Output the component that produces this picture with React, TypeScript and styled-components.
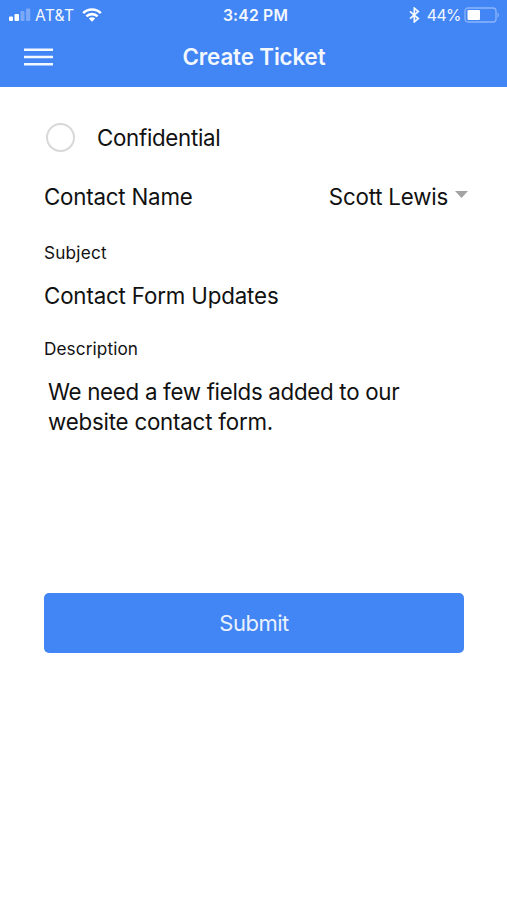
import React from 'react';
import styled, { createGlobalStyle } from 'styled-components';

const GlobalStyle = createGlobalStyle`
  * { box-sizing: border-box; }
  body { margin: 0; background: #fff; }
  button, input, textarea { font: inherit; }
`;

const Screen = styled.div`
  width: 507px;
  height: 900px;
  overflow: hidden;
  background: #fff;
  color: #111;
  font-family: Inter, 'Liberation Sans', sans-serif;
  font-size: 22.3px;
`;

const Header = styled.header`
  height: 87px;
  background: #4285f4;
  color: #f3f8ff;
`;

const Bar = styled.div<{ $height: number }>`
  display: grid;
  grid-template-columns: 1fr auto 1fr;
  align-items: center;
  height: ${(p) => p.$height}px;
`;

const StatusGroup = styled.div<{ $end?: boolean }>`
  display: flex;
  align-items: center;
  justify-content: ${(p) => (p.$end ? 'flex-end' : 'flex-start')};
  padding: ${(p) => (p.$end ? '0 7px 0 0' : '0 0 0 8px')};
`;

const StatusText = styled.span<{ $weight?: number; $tracking?: number }>`
  padding-top: 1px;
  font-size: 15.7px;
  line-height: 20px;
  font-weight: ${(p) => p.$weight ?? 400};
  letter-spacing: ${(p) => p.$tracking ?? 0}px;
  white-space: nowrap;
`;

const Clock = styled(StatusText)`
  padding-left: 4px;
`;

const Glyph = styled.svg<{ $gap?: number }>`
  display: block;
  flex: none;
  margin-right: ${(p) => p.$gap ?? 0}px;
`;

const MenuButton = styled.button`
  display: block;
  margin: 0 0 0 24px;
  padding: 0;
  width: 29px;
  height: 18px;
  border: 0;
  background: none;
  color: inherit;
`;

const Title = styled.h1`
  margin: 0;
  padding-left: 1px;
  font-size: 22.3px;
  line-height: 28px;
  font-weight: 600;
  letter-spacing: -0.1px;
`;

const Form = styled.main`
  display: flex;
  flex-direction: column;
  padding: 36px 43px 0 44px;
`;

const CheckRow = styled.label`
  display: flex;
  align-items: center;
  gap: 22px;
  height: 29px;
  padding-left: 2px;
`;

const Radio = styled.span`
  width: 29px;
  height: 29px;
  border: 2px solid #d8d8d8;
  border-radius: 50%;
`;

const ContactRow = styled.div`
  display: flex;
  align-items: center;
  justify-content: space-between;
  height: 30px;
  margin: 30px -4px 0 0;
`;

const Picker = styled.div`
  display: flex;
  align-items: center;
  gap: 7px;
`;

const Text = styled.span<{ $tracking: number }>`
  line-height: 30px;
  letter-spacing: ${(p) => p.$tracking}px;
  white-space: nowrap;
`;

const FieldLabel = styled.div<{ $top: number; $tracking: number }>`
  margin-top: ${(p) => p.$top}px;
  font-size: 17.2px;
  line-height: 22px;
  letter-spacing: ${(p) => p.$tracking}px;
`;

const FieldValue = styled.div`
  display: flex;
  flex-direction: column;
  margin-top: 17px;
`;

const Description = styled(FieldValue)`
  height: 175px;
  padding-left: 4px;
`;

const SubmitButton = styled.button`
  height: 60px;
  margin: 41px 0 0;
  padding: 0;
  border: 0;
  border-radius: 5px;
  background: #4285f4;
  color: #e8f1ff;
  font-size: 22px;
  letter-spacing: -0.5px;
`;

const SignalIcon = () => (
  <Glyph width="23" height="14" viewBox="0 0 23 14" $gap={4}>
    <g fill="#fff">
      <rect x="1" y="8.5" width="4" height="4.5" rx="1" />
      <rect x="6.5" y="6" width="4.5" height="7" rx="1" />
      <rect x="12.5" y="3" width="4" height="10" rx="1" opacity=".3" />
      <rect x="18" y="0.5" width="4.3" height="12.5" rx="1" opacity=".3" />
    </g>
  </Glyph>
);

const WifiIcon = () => (
  <Glyph width="20" height="14" viewBox="0 0 20 14">
    <g fill="none" stroke="#fff" strokeWidth="2.7">
      <path d="M1.2 5.1a12.6 12.6 0 0 1 17.6 0" />
      <path d="M4.4 8.4a8 8 0 0 1 11.2 0" />
    </g>
    <path d="M10 13.8 6.8 10.6a4.6 4.6 0 0 1 6.4 0Z" fill="#fff" />
  </Glyph>
);

const BluetoothIcon = () => (
  <Glyph width="11" height="16" viewBox="0 0 11 16" $gap={7}>
    <path d="m1 4.3 8.3 7.2-4 3.4V1.1l4 3.4L1 11.7" fill="none" stroke="#f3f8ff" strokeWidth="1.7" />
  </Glyph>
);

const BatteryIcon = () => (
  <Glyph width="36" height="16" viewBox="0 0 36 16">
    <rect x="1" y="1" width="31" height="14" rx="3" fill="none" stroke="#8bb5fb" strokeWidth="1.3" />
    <rect x="3.5" y="3" width="12.5" height="10" rx="1" fill="#fff" />
    <path d="M33.5 5.5c1.8.4 1.8 4.6 0 5Z" fill="#8bb5fb" />
  </Glyph>
);

const StatusItems = styled.div<{ $gap: number }>`
  display: flex;
  align-items: center;
  gap: ${(p) => p.$gap}px;
`;

export default function App() {
  return (
    <Screen>
      <GlobalStyle />
      <Header>
        <Bar $height={30}>
          <StatusGroup>
            <SignalIcon />
            <StatusItems $gap={8}>
              <StatusText $tracking={0.2}>AT&amp;T</StatusText>
              <WifiIcon />
            </StatusItems>
          </StatusGroup>
          <Clock $weight={600} $tracking={0.2}>3:42 PM</Clock>
          <StatusGroup $end>
            <BluetoothIcon />
            <StatusItems $gap={3}>
              <StatusText $tracking={-0.5}>44%</StatusText>
              <BatteryIcon />
            </StatusItems>
          </StatusGroup>
        </Bar>
        <Bar $height={54}>
          <MenuButton aria-label="Menu">
            <Glyph width="29" height="18" viewBox="0 0 29 18">
              <path d="M0 1.7h29M0 9h29M0 16.2h29" stroke="currentColor" strokeWidth="2.4" />
            </Glyph>
          </MenuButton>
          <Title>Create Ticket</Title>
        </Bar>
      </Header>
      <Form>
        <CheckRow>
          <Radio />
          <Text $tracking={-0.3}>Confidential</Text>
        </CheckRow>
        <ContactRow>
          <Text $tracking={-0.2}>Contact Name</Text>
          <Picker>
            <Text $tracking={-0.2}>Scott Lewis</Text>
            <Glyph width="13" height="14" viewBox="0 0 13 14">
              <path d="M0 1h13L6.5 8Z" fill="#a3a3a3" />
            </Glyph>
          </Picker>
        </ContactRow>
        <FieldLabel $top={30} $tracking={0.2}>Subject</FieldLabel>
        <FieldValue>
          <Text $tracking={-0.15}>Contact Form Updates</Text>
        </FieldValue>
        <FieldLabel $top={27} $tracking={0.1}>Description</FieldLabel>
        <Description>
          <Text $tracking={-0.29}>We need a few fields added to our</Text>
          <Text $tracking={-0.2}>website contact form.</Text>
        </Description>
        <SubmitButton>Submit</SubmitButton>
      </Form>
    </Screen>
  );
}
